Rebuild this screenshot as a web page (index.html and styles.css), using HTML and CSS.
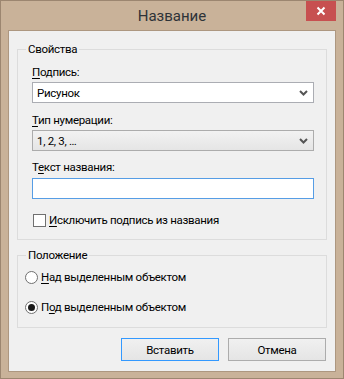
FILE: index.html
```html
<!DOCTYPE html>
<html lang="ru">

<head>
  <meta charset="UTF-8" />
  <title>Название</title>
  <link rel="stylesheet" href="styles.css">
</head>

<body>
  <div class="window">
    <div class="titlebar">
      <span class="title">Название</span>
      <div class="close">
        <svg width="10" height="10" viewBox="0 0 10 10">
          <path d="M1.5 1.5 L8.5 8.5 M8.5 1.5 L1.5 8.5" stroke="#fff" stroke-width="2" fill="none" />
        </svg>
      </div>
    </div>

    <div class="client">
      <fieldset class="group">
        <legend>Свойства</legend>
        <div class="group-body props">
          <label class="field-label"><u>П</u>одпись:</label>
          <div class="combo combo-edit">
            <span>Рисунок</span>
            <svg class="arrow" width="9" height="6" viewBox="0 0 9 6">
              <path d="M1 1 L4.5 4.5 L8 1" stroke="#555" stroke-width="2" fill="none" />
            </svg>
          </div>

          <label class="field-label lbl-type"><u>Т</u>ип нумерации:</label>
          <div class="combo combo-list">
            <span>1, 2, 3, …</span>
            <svg class="arrow" width="9" height="6" viewBox="0 0 9 6">
              <path d="M1 1 L4.5 4.5 L8 1" stroke="#555" stroke-width="2" fill="none" />
            </svg>
          </div>

          <label class="field-label lbl-text">Т<u>е</u>кст названия:</label>
          <div class="textbox"></div>

          <div class="check-row">
            <span class="checkbox"></span>
            <span><u>И</u>сключить подпись из названия</span>
          </div>
        </div>
      </fieldset>

      <fieldset class="group group-pos">
        <legend>Положение</legend>
        <div class="group-body position">
          <div class="radio-row">
            <span class="radio"></span>
            <span><u>Н</u>ад выделенным объектом</span>
          </div>
          <div class="radio-row">
            <span class="radio checked"></span>
            <span>П<u>о</u>д выделенным объектом</span>
          </div>
        </div>
      </fieldset>

      <div class="buttons">
        <div class="btn btn-default">Вставить</div>
        <div class="btn">Отмена</div>
      </div>
    </div>
  </div>
</body>

</html>
```

FILE: styles.css
```css
* {
  box-sizing: border-box;
  margin: 0;
  padding: 0;
}

body {
  font-family: Roboto, 'Noto Sans', sans-serif;
  font-size: 11.5px;
  letter-spacing: -0.3px;
  color: #000;
  background: #fff;
}

u {
  text-decoration: underline;
  text-underline-offset: 2px;
}

.window {
  width: 344px;
  height: 379px;
  border: 1px solid #9c8670;
  background: #c9b299;
  display: flex;
  flex-direction: column;
}

.titlebar {
  height: 29px;
  position: relative;
  display: flex;
  justify-content: center;
  align-items: center;
}

.title {
  font-size: 15px;
  letter-spacing: 0;
  color: #2e3338;
  line-height: 20px;
}

.close {
  position: absolute;
  right: 7px;
  top: 0;
  width: 30px;
  height: 20px;
  background: #c75050;
  display: flex;
  justify-content: center;
  align-items: center;
}

.client {
  flex: 1;
  margin: 0 7px 6px;
  background: #f0f0f0;
  border: 1px solid #ad9780;
  padding: 10px 8px 0;
}

.group {
  border: 1px solid #dcdcdc;
  padding: 0;
}

.group legend {
  margin-left: 8px;
  padding: 0 2px;
  line-height: 16px;
  color: #000;
}

.props {
  padding: 7px 12px 11px 14px;
}

.field-label {
  display: block;
  line-height: 16px;
  margin-bottom: 2px;
}

.lbl-type {
  margin-top: 9px;
}

.lbl-text {
  margin-top: 8px;
  margin-bottom: 3px;
}

.combo {
  height: 21px;
  display: flex;
  align-items: center;
  justify-content: space-between;
  padding: 0 5px 0 4px;
}

.combo-edit {
  background: #fff;
  border: 1px solid #abadb3;
}

.combo-list {
  background: linear-gradient(#f2f2f2, #e5e5e5);
  border: 1px solid #acacac;
}

.textbox {
  height: 21px;
  background: #fff;
  border: 1px solid #569de5;
}

.check-row {
  margin-top: 13px;
  display: flex;
  align-items: center;
  line-height: 16px;
  gap: 3px;
}

.checkbox {
  width: 13px;
  height: 13px;
  margin-left: 1px;
  background: #fff;
  border: 1px solid #707070;
}

.group-pos {
  margin-top: 7px;
}

.position {
  padding: 6px 10px 12px 7px;
}

.radio-row {
  display: flex;
  align-items: center;
  line-height: 16px;
  gap: 3px;
}

.radio-row + .radio-row {
  margin-top: 14px;
}

.radio {
  width: 13px;
  height: 13px;
  border-radius: 50%;
  background: #fff;
  border: 1px solid #707070;
  display: flex;
  justify-content: center;
  align-items: center;
}

.radio.checked::after {
  content: '';
  width: 7px;
  height: 7px;
  border-radius: 50%;
  background: #1a1a1a;
}

.buttons {
  margin-top: 10px;
  display: flex;
  justify-content: flex-end;
  gap: 9px;
  padding-right: 1px;
}

.btn {
  width: 98px;
  height: 23px;
  border: 1px solid #acacac;
  background: linear-gradient(#f0f0f0, #e5e5e5);
  display: flex;
  justify-content: center;
  align-items: center;
}

.btn-default {
  border-color: #3399ff;
}
```
